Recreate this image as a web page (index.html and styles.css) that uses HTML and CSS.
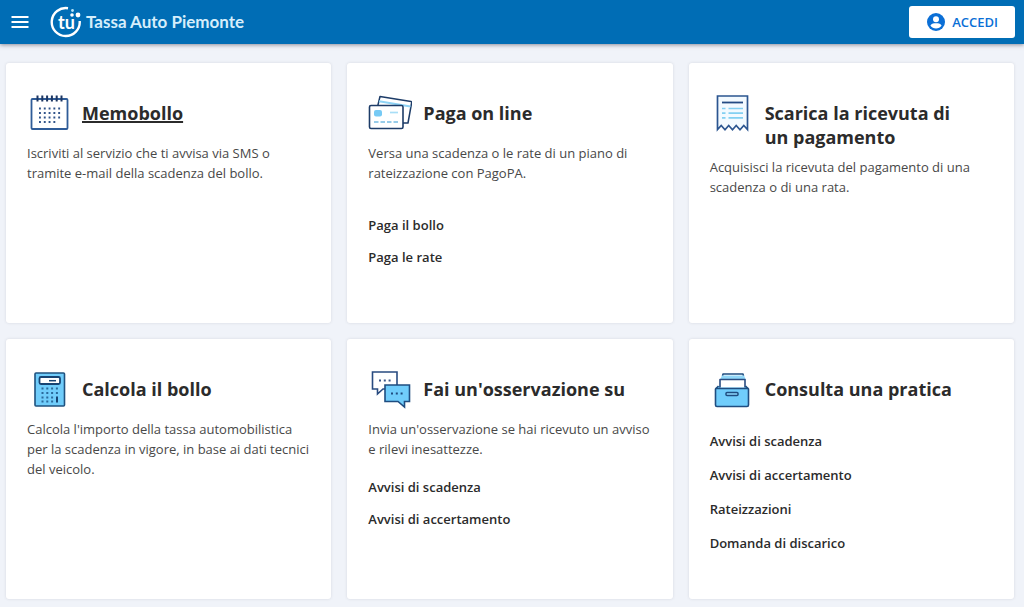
FILE: index.html
```html
<!DOCTYPE html>
<html lang="it">
<head>
<meta charset="utf-8">
<meta name="viewport" content="width=device-width, initial-scale=1">
<title>Tassa Auto Piemonte</title>
<link rel="stylesheet" href="styles.css">
</head>
<body>
<header class="topbar">
  <button class="menu" type="button" aria-label="Menu">
    <svg width="18" height="12" viewBox="0 0 18 12"><path d="M0.500 1H17.500M0.500 6H17.500M0.500 11H17.500" stroke="#fff" stroke-width="2"/></svg>
  </button>
  <a class="brand" href="#">
    <span class="logo">
      <svg width="32" height="32" viewBox="0 0 32 32" fill="none">
        <path d="M18 2.200A14 14 0 1 0 29.700 15" stroke="#fff" stroke-width="2.400"/>
        <circle cx="22.500" cy="4.500" r="1.400" fill="#b5e2f7"/><circle cx="22" cy="9" r="1.800" fill="#fff"/><circle cx="28" cy="9" r="2.400" fill="#fff"/>
      </svg>
      <span class="logo-text">tu</span>
    </span>
    <span class="brand-name">Tassa Auto Piemonte</span>
  </a>
  <button class="login" type="button">
    <svg width="20" height="20" viewBox="0 0 20 20"><circle cx="10" cy="10" r="9" fill="#0b6fd6"/><circle cx="10" cy="7.200" r="3" fill="#fff"/><path d="M4.400 13.400C5.600 11.400 8 11.300 10 11.300S14.400 11.400 15.600 13.400A6.600 6.600 0 0 1 4.400 13.400Z" fill="#fff"/></svg>
    ACCEDI
  </button>
</header>

<main class="grid">
  <section class="card">
    <div class="head">
      <svg class="icon" viewBox="0 0 44 44" fill="none">
        <rect x="4.500" y="8" width="36" height="30" rx="1" stroke="#2f5c98" stroke-width="1.800"/>
        <path d="M10.500 4.500V10.500M15.300 4.500V10.500M20.100 4.500V10.500M24.900 4.500V10.500M29.700 4.500V10.500M34.500 4.500V10.500" stroke="#1c3764" stroke-width="2"/>
        <path d="M12 17.500H34M12 22H34M12 26.500H34M12 31H29" stroke="#31548a" stroke-width="1.800" stroke-dasharray="1.900 2.900"/>
      </svg>
      <h2 class="title"><a class="title-link" href="#">Memobollo</a></h2>
    </div>
    <p class="text">Iscriviti al servizio che ti avvisa via SMS o tramite e-mail della scadenza del bollo.</p>
  </section>

  <section class="card">
    <div class="head">
      <svg class="icon" viewBox="0 0 44 44" fill="none" stroke-linejoin="round">
        <path d="M12 5.500L43 10.500Q44 10.800 43.600 12L40 32H20L9 18Z" fill="#fff" stroke="#1d3c68" stroke-width="1.500"/>
        <path d="M11 10.200L42.500 15.600" stroke="#8ed3f5" stroke-width="2"/>
        <rect x="1.500" y="14.500" width="33.500" height="23" rx="1.500" fill="#fff" stroke="#1d3c68" stroke-width="1.600"/>
        <rect x="6" y="19" width="8" height="6.500" rx="2" fill="#76caf5"/>
        <path d="M22 21.500H30" stroke="#a8def7" stroke-width="1.700"/>
        <path d="M6 31H30.500" stroke="#76bce2" stroke-width="1.600" stroke-dasharray="4.500 2"/>
      </svg>
      <h2 class="title">Paga on line</h2>
    </div>
    <p class="text">Versa una scadenza o le rate di un piano di rateizzazione con PagoPA.</p>
    <ul class="links links-far">
      <li><a class="link" href="#">Paga il bollo</a></li>
      <li><a class="link" href="#">Paga le rate</a></li>
    </ul>
  </section>

  <section class="card">
    <div class="head">
      <svg class="icon" viewBox="0 0 44 44" fill="none">
        <path d="M7.500 38.500V5H37.500V38.500L33.800 34.500L30 38.800L26.200 34.500L22.500 38.800L18.700 34.500L15 38.800L11.200 34.500Z" fill="#f3faff" stroke="#2b5590" stroke-width="1.700"/>
        <path d="M12 11.500H33" stroke="#244b84" stroke-width="1.800"/>
        <path d="M12 17.500H15.500M18.500 17.500H33M12 22.200H15.500M18.500 22.200H33M12 26.800H15.500M18.500 26.800H33" stroke="#83d0f2" stroke-width="1.700"/>
      </svg>
      <h2 class="title">Scarica la ricevuta di un pagamento</h2>
    </div>
    <p class="text">Acquisisci la ricevuta del pagamento di una scadenza o di una rata.</p>
  </section>

  <section class="card">
    <div class="head">
      <svg class="icon" viewBox="0 0 44 44" fill="none">
        <rect x="8" y="6" width="29.500" height="33" rx="1" fill="#70cdfb" stroke="#1f527f" stroke-width="1.600"/>
        <rect x="12.500" y="10" width="20.500" height="7" rx="1.500" fill="#fff" stroke="#174473" stroke-width="1.800"/>
        <path d="M22 13.700H29" stroke="#174473" stroke-width="1.500"/>
        <path d="M14.500 21.500H32M14.500 26H32M14.500 30.500H28M14.500 34.500H27" stroke="#2a6a9c" stroke-width="1.800" stroke-dasharray="2 2.800"/>
        <path d="M30 29.500V35.500" stroke="#174473" stroke-width="2"/>
      </svg>
      <h2 class="title">Calcola il bollo</h2>
    </div>
    <p class="text">Calcola l'importo della tassa automobilistica per la scadenza in vigore, in base ai dati tecnici del veicolo.</p>
  </section>

  <section class="card">
    <div class="head">
      <svg class="icon" viewBox="0 0 44 44" fill="none">
        <path d="M4.500 5H29V22H15L9.500 27V22H4.500Z" fill="#fff" stroke="#294b80" stroke-width="1.600"/>
        <path d="M11 13.500H23" stroke="#3c5787" stroke-width="2" stroke-dasharray="2 2.800"/>
        <path d="M17 18H41.500V34.500H36.500V40L30 34.500H17Z" fill="#70cdfb" stroke="#1f4d80" stroke-width="1.600"/>
        <path d="M23 26.500H35" stroke="#1f4d80" stroke-width="2" stroke-dasharray="2 2.800"/>
      </svg>
      <h2 class="title">Fai un'osservazione su</h2>
    </div>
    <p class="text">Invia un'osservazione se hai ricevuto un avviso e rilevi inesattezze.</p>
    <ul class="links">
      <li><a class="link" href="#">Avvisi di scadenza</a></li>
      <li><a class="link" href="#">Avvisi di accertamento</a></li>
    </ul>
  </section>

  <section class="card">
    <div class="head">
      <svg class="icon" viewBox="0 0 44 44" fill="none" stroke-linejoin="round">
        <path d="M12.500 9L13 7H33L33.500 9" stroke="#1f4d80" stroke-width="1.500"/>
        <path d="M12 8.500H34L36 13H10Z" fill="#91d7f8"/>
        <path d="M8.500 19L5.500 22V38Q5.500 39.500 7 39.500H37Q38.500 39.500 38.500 38V22L35.500 19" fill="#70cdfb" stroke="#1f4d80" stroke-width="1.600"/>
        <path d="M10 20.500V12.500H35V20.500" fill="#fff" stroke="#294b80" stroke-width="1.600"/>
        <path d="M5.500 21.500H38.500" stroke="#1f4d80" stroke-width="1.600"/>
        <rect x="16" y="25.500" width="12" height="3" rx="1" fill="#8edaff" stroke="#1f4d80" stroke-width="1.500"/>
      </svg>
      <h2 class="title">Consulta una pratica</h2>
    </div>
    <ul class="links links-wide">
      <li><a class="link" href="#">Avvisi di scadenza</a></li>
      <li><a class="link" href="#">Avvisi di accertamento</a></li>
      <li><a class="link" href="#">Rateizzazioni</a></li>
      <li><a class="link" href="#">Domanda di discarico</a></li>
    </ul>
  </section>
</main>
</body>
</html>
```
FILE: styles.css
```css
* { box-sizing: border-box; }

body {
  margin: 0;
  background: #f0f3f9;
  color: #2b2b2b;
  font-family: "Open Sans", "Noto Sans", sans-serif;
  font-size: 13px;
  line-height: 20px;
}

.topbar {
  display: flex;
  align-items: center;
  height: 44px;
  padding: 0 9px 0 11px;
  background: #006db5;
  box-shadow: 0 1px 4px rgba(40, 40, 60, 0.5);
}

.menu {
  display: flex;
  padding: 0;
  border: 0;
  background: none;
}

.brand {
  display: flex;
  align-items: center;
  gap: 4px;
  margin-left: 21px;
  color: #d6eefb;
  text-decoration: none;
}

.logo {
  position: relative;
  display: flex;
}

.logo-text {
  position: absolute;
  inset: 5px 0 0 8px;
  font-family: Lato, sans-serif;
  font-size: 18px;
  font-weight: 700;
  line-height: 22px;
  color: #fff;
}

.brand-name {
  font-family: Lato, sans-serif;
  font-size: 17px;
  font-weight: 700;
}

.login {
  display: flex;
  align-items: center;
  justify-content: center;
  gap: 6px;
  height: 32px;
  margin-left: auto;
  padding: 0 17px;
  border: 0;
  border-radius: 3px;
  background: #fff;
  color: #0b6fd6;
  font-family: inherit;
  font-size: 13px;
  font-weight: 600;
}

.grid {
  display: grid;
  grid-template-columns: repeat(3, 1fr);
  grid-auto-rows: minmax(260px, auto);
  gap: 16px;
  padding: 19px 10px 7px 6px;
}

.card {
  padding: 28px 21px;
  border-radius: 3px;
  background: #fff;
  box-shadow: 0 0 3px rgba(60, 60, 80, 0.15);
}

.head {
  display: flex;
  gap: 11px;
}

.icon {
  flex: none;
  width: 44px;
  height: 44px;
}

.title {
  margin: 0;
  padding: 10px 16px 0 0;
  font-size: 18px;
  font-weight: 700;
  line-height: 24px;
}

.title-link {
  color: inherit;
  text-decoration-thickness: 2px;
}

.text {
  margin: 8px 0 0;
  color: #484848;
}

.links {
  display: grid;
  gap: 12px;
  margin: 18px 0 0;
  padding: 0;
  list-style: none;
}

.links-far { margin-top: 32px; }

.links-wide {
  gap: 14px;
  margin-top: 20px;
}

.link {
  color: inherit;
  font-weight: 600;
  text-decoration: none;
}
```
